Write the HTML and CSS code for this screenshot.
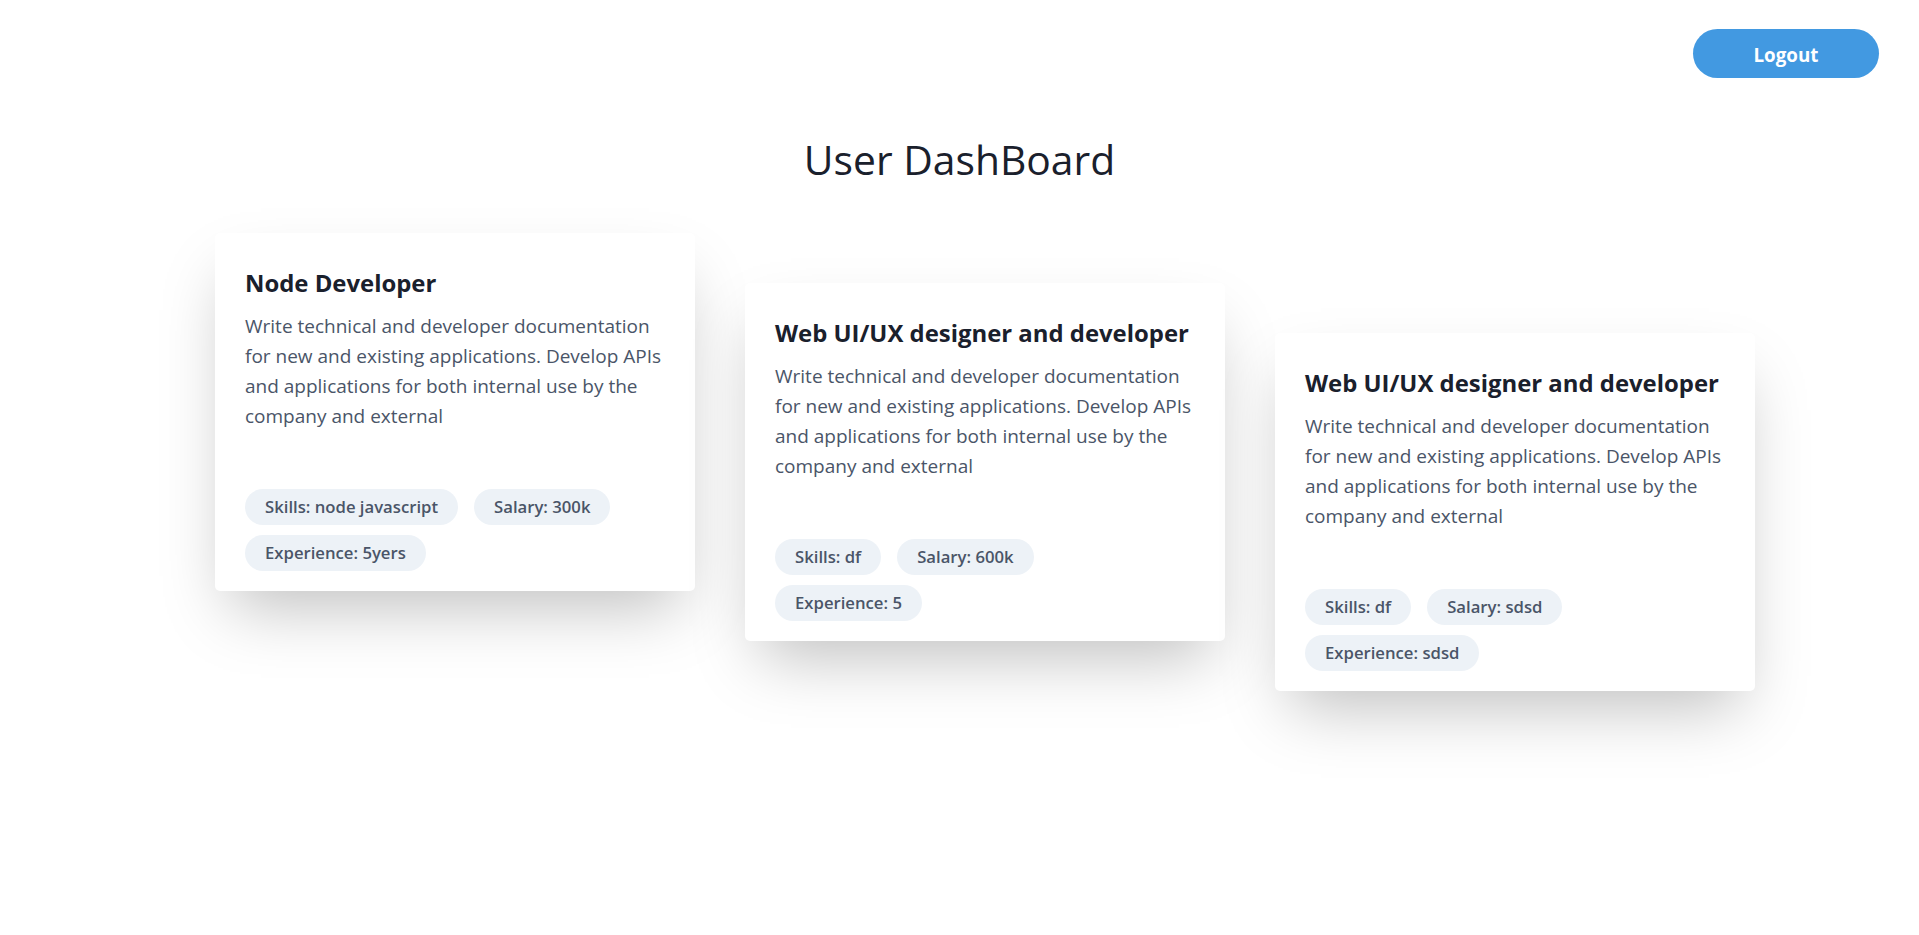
FILE: index.html
```
<!DOCTYPE html>
<html lang="en">
<head>
<meta charset="utf-8">
<title>User DashBoard</title>
<link rel="stylesheet" href="styles.css">
</head>
<body>
<header class="topbar">
  <button class="logout">Logout</button>
</header>
<h1 class="page-title">User DashBoard</h1>
<main class="cards">
  <article class="card">
    <div class="card-body">
      <h2 class="card-title">Node Developer</h2>
      <p class="card-text">Write technical and developer documentation for new and existing applications. Develop APIs and applications for both internal use by the company and external</p>
    </div>
    <div class="tags">
      <span class="tag">Skills: node javascript</span>
      <span class="tag">Salary: 300k</span>
      <span class="tag">Experience: 5yers</span>
    </div>
  </article>
  <article class="card card-2">
    <div class="card-body">
      <h2 class="card-title">Web UI/UX designer and developer</h2>
      <p class="card-text">Write technical and developer documentation for new and existing applications. Develop APIs and applications for both internal use by the company and external</p>
    </div>
    <div class="tags">
      <span class="tag">Skills: df</span>
      <span class="tag">Salary: 600k</span>
      <span class="tag">Experience: 5</span>
    </div>
  </article>
  <article class="card card-3">
    <div class="card-body">
      <h2 class="card-title">Web UI/UX designer and developer</h2>
      <p class="card-text">Write technical and developer documentation for new and existing applications. Develop APIs and applications for both internal use by the company and external</p>
    </div>
    <div class="tags">
      <span class="tag">Skills: df</span>
      <span class="tag">Salary: sdsd</span>
      <span class="tag">Experience: sdsd</span>
    </div>
  </article>
</main>
</body>
</html>
```
FILE: styles.css
```
* { box-sizing: border-box; }
html, body { margin: 0; padding: 0; background: #ffffff; }
body {
  min-height: 100vh;
  font-family: "Open Sans", "Noto Sans", sans-serif;
  color: #1a202c;
}
.topbar {
  display: flex;
  justify-content: flex-end;
  padding: 29px 40px 0 0;
}
.logout {
  width: 186px;
  height: 49px;
  border: none;
  border-radius: 25px;
  background: #4299e1;
  color: #ffffff;
  font-family: "Open Sans", "Noto Sans", sans-serif;
  font-weight: 700;
  font-size: 18.8px;
  line-height: 30px;
  padding: 2px 0 0;
  cursor: pointer;
}
.page-title {
  margin: 53px 0 0;
  text-align: center;
  font-weight: 400;
  font-size: 40.8px;
  line-height: 56px;
  color: #1a202c;
}
.cards {
  display: flex;
  align-items: flex-start;
  gap: 50px;
  padding: 46px 0 120px 215px;
}
.card {
  width: 480px;
  flex: none;
  background: #ffffff;
  border-radius: 5px;
  box-shadow: 0 31px 62px -15px rgba(0, 0, 0, 0.25);
  padding: 32px 30px 20px;
}
.card-2 { margin-top: 50px; }
.card-3 { margin-top: 100px; }
.card-title {
  margin: 0 0 11px;
  font-size: 23.9px;
  line-height: 35px;
  font-weight: 700;
  color: #1a202c;
  white-space: nowrap;
}
.card-text {
  margin: 0;
  font-size: 19px;
  line-height: 30px;
  color: #4a5568;
}
.tags {
  display: flex;
  flex-wrap: wrap;
  gap: 10px 6px;
  margin-top: 58px;
}
.tag {
  display: inline-block;
  margin-right: 10px;
  background: #edf2f7;
  color: #4a5568;
  border-radius: 999px;
  padding: 5px 20px;
  font-size: 16.7px;
  line-height: 26px;
  font-weight: 600;
}
```
